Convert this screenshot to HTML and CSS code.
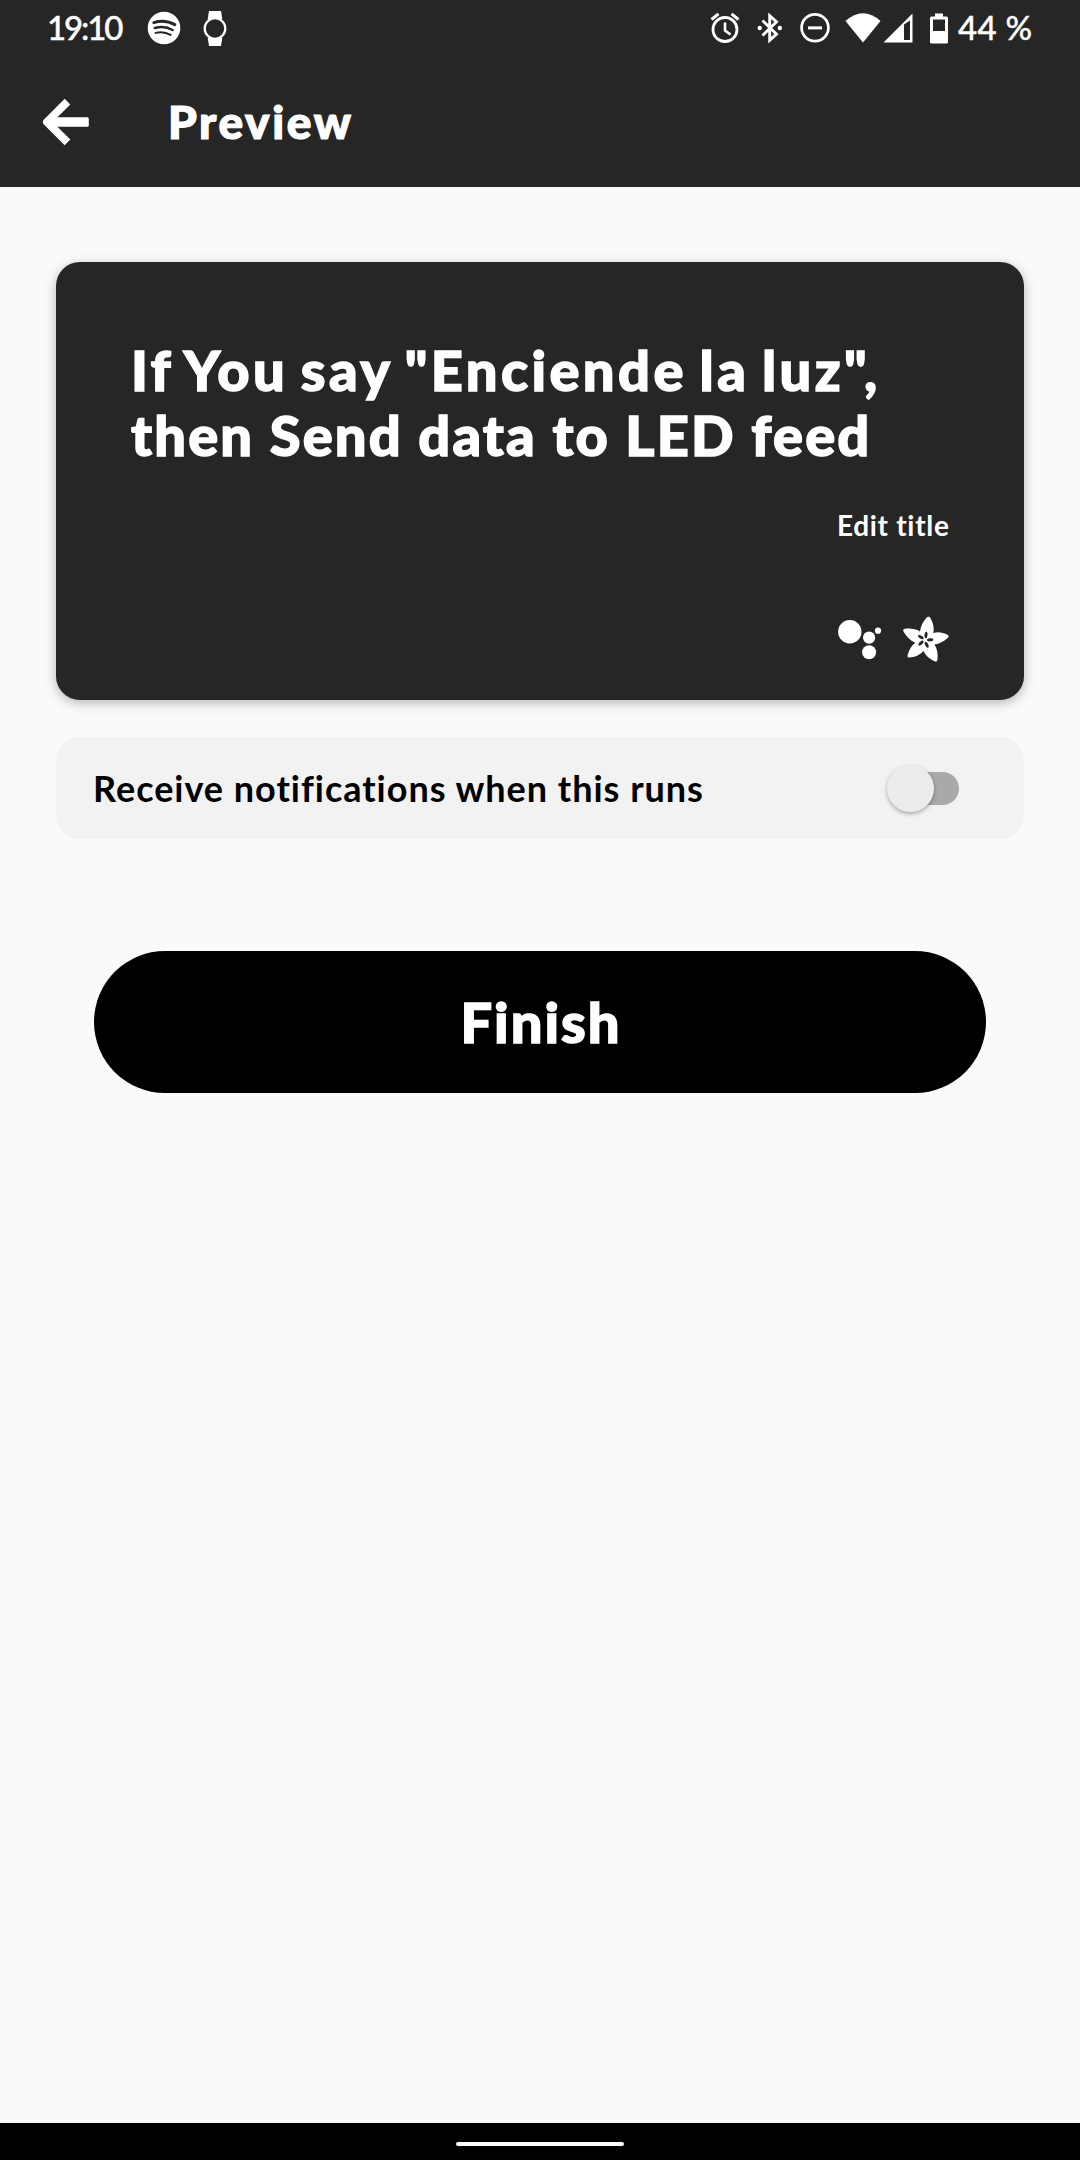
FILE: index.html
```html
<!DOCTYPE html>
<html lang="en">
<head>
<meta charset="utf-8">
<title>Preview</title>
<link rel="stylesheet" href="styles.css">
</head>
<body>
<header class="header">
  <div class="status">
    <div class="status-left">
      <span class="time">19:10</span>
      <svg class="spotify" width="34" height="34" viewBox="0 0 34 34"><circle cx="17" cy="17" r="16.300" fill="#fff"/><g fill="none" stroke="#262626" stroke-linecap="round"><path d="M6.800 11.600Q18 8.200 27.800 13.600" stroke-width="3"/><path d="M7.800 17Q17.500 14.200 25.600 19" stroke-width="2.500"/><path d="M8.600 21.900Q16.500 19.800 23.600 23.900" stroke-width="2"/></g></svg>
      <svg class="watch" width="24" height="36" viewBox="0 0 24 36"><path fill="#fff" d="M6 0H18L19.300 8H4.700ZM4.700 27H19.300L18 35H6Z"/><circle cx="12" cy="17.500" r="10.300" fill="#262626" stroke="#fff" stroke-width="2.300"/></svg>
    </div>
    <div class="status-right">
      <svg class="alarm" width="30" height="32" viewBox="0 0 30 32" fill="none" stroke="#fff"><circle cx="15" cy="17.500" r="12" stroke-width="2.800"/><path d="M15 10.500V18.500L20.500 22.500" stroke-width="2.600"/><path d="M1.500 7.500L8.500 1.800M21.500 1.800L28.500 7.500" stroke-width="3"/></svg>
      <svg class="bt" width="26" height="32" viewBox="0 0 26 32"><path d="M5.500 8.500L19.500 22.200L12.700 28.200V3.800L19.500 9.800L5.500 23.500" fill="none" stroke="#fff" stroke-width="2.900"/><circle cx="2.700" cy="16" r="2.200" fill="#fff"/><circle cx="22.800" cy="16" r="2.200" fill="#fff"/></svg>
      <svg class="dnd" width="30" height="32" viewBox="0 0 30 32" fill="none" stroke="#fff" stroke-width="2.700"><circle cx="15" cy="15.800" r="13.400"/><path d="M8 15.900H22" stroke-width="3"/></svg>
      <svg class="wifi" width="36" height="30" viewBox="0 0 36 30"><path d="M0.500 8Q18-7.500 35.500 8L18 29.500Z" fill="#fff"/></svg>
      <svg class="cell" width="30" height="30" viewBox="0 0 30 30"><path fill="#fff" fill-rule="evenodd" d="M0.500 29.500L29.500 0.500V29.500ZM21 11.500V27H27V7.500Z"/></svg>
      <svg class="battery" width="18" height="31" viewBox="0 0 18 31"><path fill="#fff" fill-rule="evenodd" d="M5 .5H13V3.500H16.500Q18 3.500 18 5V29Q18 30.500 16.500 30.500H1.500Q0 30.500 0 29V5Q0 3.500 1.500 3.500H5ZM3 6.500V18H15V6.500Z"/></svg>
      <span class="percent">44 %</span>
    </div>
  </div>
  <div class="toolbar">
    <svg class="back" width="48" height="48" viewBox="0 0 48 48"><rect x="10" y="19.200" width="37.800" height="9.600" rx="1.500" fill="#fff"/><path d="M26.500 3.600L6 24L26.500 44.400" fill="none" stroke="#fff" stroke-width="8" stroke-linejoin="round"/></svg>
    <h1 class="heading">Preview</h1>
  </div>
</header>
<main class="content">
  <section class="card">
    <p class="title"><span class="line line-one">If You say "Enciende la luz",</span><span class="line line-two">then Send data to LED feed</span></p>
    <a class="edit">Edit title</a>
    <div class="services">
      <svg width="44" height="46" viewBox="0 0 44 46" fill="#fff"><circle cx="11.800" cy="15.700" r="11.700"/><circle cx="31.100" cy="21.600" r="6.100"/><circle cx="31.100" cy="36.200" r="7"/><circle cx="40" cy="14.700" r="3.100"/></svg>
      <svg width="46" height="46" viewBox="0 0 46 46"><path fill="#fff" d="M25.300.7C26.400.5 27 1.200 27.500 2.200C30.400 7.500 31.300 12 30.300 17C35.500 15.600 40 16.500 44.500 18.700C46.200 19.600 46 20.800 44.600 22C40.500 25.600 36.500 27.800 31.500 28.500C34.500 33 35 38 34.400 43.700C34.200 45.500 33 45.900 31.400 45.300C26.500 43 22.500 39.500 20.500 35C16.500 39.300 12 41 6.500 41.600C4.700 41.700 4.200 40.700 4.600 39.200C6 34 8.200 29.800 12.200 26.800C7 24.300 3.200 20.500.5 15.500C-.2 14 .4 12.900 2 12.700C7.500 12.100 12.500 12.500 17 15.400C17.800 10.200 20 5.800 23.500 1.800C24 1.200 24.600.8 25.300.7Z"/><g fill="#262626"><ellipse cx="23" cy="19" rx="1.500" ry="3.200" transform="rotate(5 23 19)"/><ellipse cx="23" cy="19" rx="1.500" ry="3.200" transform="rotate(77 22 24) rotate(5 23 19)"/><ellipse cx="23" cy="19" rx="1.500" ry="3.200" transform="rotate(149 22 24) rotate(5 23 19)"/><ellipse cx="23" cy="19" rx="1.500" ry="3.200" transform="rotate(221 22 24) rotate(5 23 19)"/><ellipse cx="23" cy="19" rx="1.500" ry="3.200" transform="rotate(293 22 24) rotate(5 23 19)"/></g></svg>
    </div>
  </section>
  <section class="notify">
    <span class="notify-label">Receive notifications when this runs</span>
    <span class="switch"><span class="thumb"></span></span>
  </section>
  <button class="finish">Finish</button>
</main>
<footer class="navbar"><span class="handle"></span></footer>
</body>
</html>
```
FILE: styles.css
```css
* { box-sizing: border-box; }
body {
  margin: 0;
  width: 1080px;
  height: 2160px;
  display: flex;
  flex-direction: column;
  background: #fafafa;
  font-family: Lato, sans-serif;
  overflow: hidden;
}
svg { display: block; flex: none; }
.header { height: 187px; background: #262626; color: #fff; }
.status {
  height: 56px;
  display: flex;
  justify-content: space-between;
  padding: 0 48px 0 47px;
  white-space: nowrap;
}
.status-left, .status-right { display: flex; }
.time, .percent { font-size: 33px; line-height: 55px; font-weight: 500; -webkit-text-stroke: .4px #fff; }
.time { width: 100px; letter-spacing: -2.1px; }
.spotify { margin-top: 11px; }
.watch { margin: 11px 0 0 22px; }
.alarm { margin: 12px 17px 0 0; }
.bt { margin: 12px 17px 0 0; }
.dnd { margin: 12px 15px 0 0; }
.wifi { margin: 13px 2px 0 0; }
.cell { margin: 13px 17px 0 0; }
.battery { margin: 13px 10px 0 0; }
.percent { width: 74px; letter-spacing: .3px; }
.toolbar { display: flex; padding: 42px 0 0 41px; }
.heading {
  margin: -1px 0 0 79px;
  font-size: 46px;
  line-height: 50px;
  font-weight: 900;
  letter-spacing: 2.6px;
  -webkit-text-stroke: 1.2px #fff;
}
.content { flex: 1; padding: 75px 56px 0; }
.card {
  height: 438px;
  padding: 75px 75px 0;
  border-radius: 24px;
  background: #262626;
  color: #fff;
  box-shadow: 0 3px 12px rgba(0, 0, 0, .28);
  display: flex;
  flex-direction: column;
}
.title {
  margin: 0;
  font-size: 56px;
  line-height: 65px;
  font-weight: 900;
  white-space: nowrap;
  -webkit-text-stroke: 1.4px #fff;
}
.line { display: block; }
.line-one { letter-spacing: 3.4px; word-spacing: -4px; }
.line-two { letter-spacing: 2.15px; }
.edit {
  align-self: flex-end;
  margin: 40px -.6px 0 0;
  font-size: 28px;
  line-height: 36px;
  font-weight: 700;
  letter-spacing: .7px;
}
.services { display: flex; justify-content: flex-end; gap: 21px; margin-top: 73px; }
.notify {
  height: 102px;
  margin-top: 37px;
  padding: 0 65px 0 37px;
  border-radius: 24px;
  background: #f2f2f2;
  display: flex;
  align-items: center;
  justify-content: space-between;
}
.notify-label {
  font-size: 36px;
  line-height: 44px;
  font-weight: 700;
  letter-spacing: .98px;
  color: #000;
  white-space: nowrap;
}
.switch {
  width: 69px;
  height: 33px;
  border-radius: 17px;
  background: #a9a9a9;
  display: flex;
  align-items: center;
}
.thumb {
  flex: none;
  width: 47px;
  height: 47px;
  margin-left: -3px;
  border-radius: 50%;
  background: #ececec;
  box-shadow: 0 2px 4px rgba(0, 0, 0, .3);
}
.finish {
  display: block;
  width: 892px;
  height: 142px;
  margin: 112px 0 0 38px;
  padding: 0 0 2px 2px;
  border: 0;
  border-radius: 71px;
  background: #000;
  color: #fff;
  font: 900 56px/65px Lato, sans-serif;
  letter-spacing: 2px;
  -webkit-text-stroke: 1.4px #fff;
}
.navbar {
  height: 37px;
  background: #000;
  display: flex;
  justify-content: center;
  padding-top: 19px;
}
.handle { width: 168px; height: 4px; border-radius: 2px; background: #fff; }
```
